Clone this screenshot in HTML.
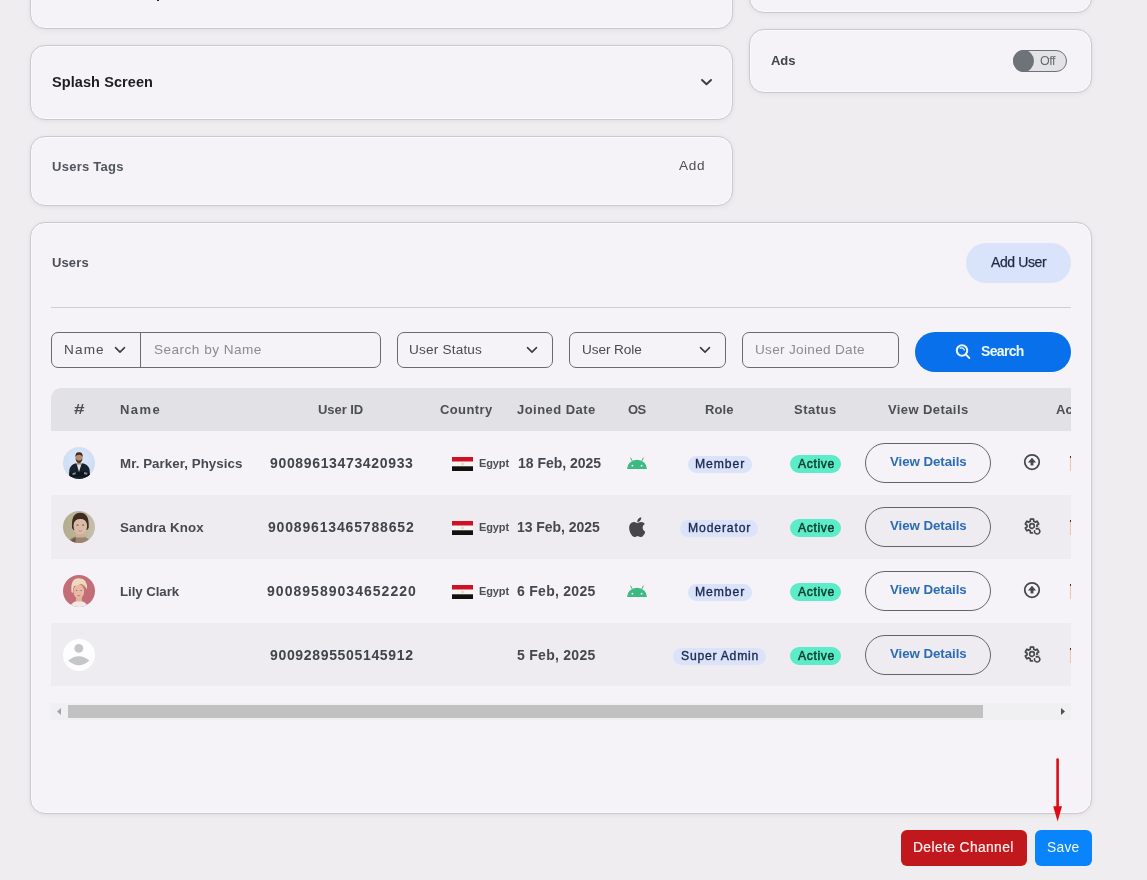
<!DOCTYPE html>
<html><head><meta charset="utf-8"><style>
html,body{margin:0;padding:0;}
body{width:1147px;height:880px;overflow:hidden;position:relative;background:#efedf0;font-family:"Liberation Sans", sans-serif;}
.card{position:absolute;box-sizing:border-box;background:#f5f3f8;border:1px solid #cbc9cf;border-radius:15px;box-shadow:0 1px 5px rgba(0,0,0,0.07), inset 0 0 0 1px rgba(255,255,255,0.5);}
.ab{position:absolute;}
.t{position:absolute;white-space:nowrap;line-height:1;font-family:"Liberation Sans", sans-serif;will-change:transform;}
</style></head><body>
<div class='card' style='left:30px;top:-60px;width:703px;height:89px'></div><div class='card' style='left:30px;top:45px;width:703px;height:75px'></div><div class='card' style='left:30px;top:136px;width:703px;height:70px'></div><div class='card' style='left:749px;top:-60px;width:343px;height:73px'></div><div class='card' style='left:749px;top:29px;width:343px;height:64px'></div><div class='card' style='left:30px;top:222px;width:1062px;height:592px'></div><div style='position:absolute;left:157.3px;top:0;width:1.8px;height:1.3px;background:#222'></div><svg class='ab' style='left:698px;top:74px' width='18' height='14' viewBox='698 74 18 14'><path d='M702 80 L706.5 84.3 L711 80' fill='none' stroke='#3a3d44' stroke-width='2' stroke-linecap='round' stroke-linejoin='round'/></svg><div class='ab' style='left:1013px;top:50px;width:54px;height:22px;box-sizing:border-box;border:1.3px solid #6e7178;border-radius:11px;background:#e3e3e7'></div><div class='ab' style='left:1013px;top:50px;width:21px;height:22px;border-radius:50%;background:#6e7279'></div><div class='ab' style='left:966px;top:243px;width:105px;height:40px;border-radius:20px;background:#d9e4fb'></div><div class='ab' style='left:51px;top:307px;width:1020px;height:1px;background:#cfced3'></div><div class='ab' style='left:51px;top:332px;width:330px;height:36px;box-sizing:border-box;border:1px solid #6a6b70;border-radius:7px;'></div><div class='ab' style='left:140px;top:332px;width:1px;height:36px;background:#6a6b70'></div><div class='ab' style='left:397px;top:332px;width:156px;height:36px;box-sizing:border-box;border:1px solid #6a6b70;border-radius:7px;'></div><div class='ab' style='left:569px;top:332px;width:157px;height:36px;box-sizing:border-box;border:1px solid #6a6b70;border-radius:7px;'></div><div class='ab' style='left:742px;top:332px;width:157px;height:36px;box-sizing:border-box;border:1px solid #6a6b70;border-radius:7px;'></div><svg class='ab' style='left:112.2px;top:344.3px' width='16' height='12' viewBox='112.2 344.3 16 12'><path d='M115.7 347.90000000000003 L120.2 352.40000000000003 L124.7 347.90000000000003' fill='none' stroke='#38393e' stroke-width='1.5' stroke-linecap='round' stroke-linejoin='round'/></svg><svg class='ab' style='left:524.3px;top:344.3px' width='16' height='12' viewBox='524.3 344.3 16 12'><path d='M527.8 347.90000000000003 L532.3 352.40000000000003 L536.8 347.90000000000003' fill='none' stroke='#38393e' stroke-width='1.5' stroke-linecap='round' stroke-linejoin='round'/></svg><svg class='ab' style='left:697px;top:344.3px' width='16' height='12' viewBox='697 344.3 16 12'><path d='M700.5 347.90000000000003 L705 352.40000000000003 L709.5 347.90000000000003' fill='none' stroke='#38393e' stroke-width='1.5' stroke-linecap='round' stroke-linejoin='round'/></svg><div class='ab' style='left:915px;top:332px;width:156px;height:40px;border-radius:20px;background:#0870ea'></div><svg class='ab' style='left:950px;top:340px' width='24' height='24' viewBox='950 340 24 24'><circle cx='962' cy='350.5' r='5.2' fill='none' stroke='#eaf8ff' stroke-width='2.1'/><path d='M966 354.6 L969.3 358' stroke='#eaf8ff' stroke-width='1.9' stroke-linecap='round'/><path d='M960.2 348.2 A3 3 0 0 1 964.3 350' fill='none' stroke='#eaf8ff' stroke-width='1.3' stroke-linecap='round'/></svg><div class='ab' style='left:51px;top:388px;width:1020px;height:43px;background:#e2e1e5;border-radius:10px 0 0 0'></div><div class='ab' style='left:51px;top:495px;width:1020px;height:64px;background:#eeecf0'></div><div class='ab' style='left:51px;top:623px;width:1020px;height:63px;background:#eeecf0'></div><div class='ab' style='left:1000px;top:395px;width:71px;height:30px;overflow:hidden'><div class='t' style='left:55.5px;top:7.6px;font-size:13px;font-weight:700;color:#4b4e55'>Actions</div></div>
<svg class='ab' style='left:63px;top:447px' width='32' height='32' viewBox='0 0 32 32'><defs><clipPath id='cm'><circle cx='16' cy='16' r='16'/></clipPath><radialGradient id='gm' cx='50%' cy='40%' r='60%'><stop offset='0' stop-color='#dce8fb'/><stop offset='1' stop-color='#cddcf3'/></radialGradient></defs><circle cx='16' cy='16' r='16' fill='url(#gm)'/><g clip-path='url(#cm)'><path d='M5.5 33 L6.5 22 Q8 17.5 13 16.3 L16 18 L19.5 16.3 Q25 17.5 26.5 22 L27.5 33 Z' fill='#17222c'/><path d='M13.6 16.8 L16 25 L18.6 16.8 L16 18.2Z' fill='#dfe3e8'/><path d='M7 26.5 Q11 23.5 16.5 25.5 Q21.5 23.5 26 26 L26 30 Q16 29 7 30Z' fill='#0f171e'/><path d='M9.5 26 L13 25.2 L12.5 27.5 L9.5 28Z' fill='#c9d0d8' opacity='.6'/><path d='M21 25 L24.5 25.8 L24 27.8 L21 27.2Z' fill='#c9d0d8' opacity='.6'/><path d='M14.5 14 L17.5 14 L17.8 17 L14.2 17Z' fill='#a87a62'/><ellipse cx='16' cy='10.6' rx='3.5' ry='4.3' fill='#b88a6e'/><path d='M12.4 10.5 Q12 5.2 16 5.3 Q20.2 5.2 19.7 10.5 Q19 7.6 16 7.7 Q13 7.6 12.4 10.5Z' fill='#3a2c24'/><path d='M12.6 11.5 Q13 15.8 16 16 Q19 15.8 19.4 11.5 Q18.5 13.5 16 13.7 Q13.5 13.5 12.6 11.5Z' fill='#4b3428'/></g></svg><svg class='ab' style='left:452px;top:457px' width='21' height='14' viewBox='0 0 21 14'><rect width='21' height='4.7' fill='#ce1126'/><rect y='4.7' width='21' height='4.6' fill='#f7f5f2'/><rect y='9.3' width='21' height='4.7' fill='#111'/><rect x='9.6' y='5.8' width='1.8' height='2.4' fill='#b8a060' opacity='.45'/></svg><svg class='ab' style='left:625px;top:455px' width='24' height='16' viewBox='625 455 24 16'><path d='M627 469 A10 9.2 0 0 1 647 469 Z' fill='#3dba84'/><path d='M630.7 458 L632.2 461' stroke='#3dba84' stroke-width='1' stroke-linecap='round'/><path d='M643.3 458 L641.8 461' stroke='#3dba84' stroke-width='1' stroke-linecap='round'/><circle cx='632.4' cy='465.7' r='0.9' fill='#e9fff4'/><circle cx='641.6' cy='465.7' r='0.9' fill='#e9fff4'/></svg><div class='ab' style='left:687.5px;top:455.5px;width:64.2px;height:17px;border-radius:9px;background:#dae3fa'></div><div class='ab' style='left:789.8px;top:455.1px;width:51px;height:17.8px;border-radius:9px;background:#5decca'></div><div class='ab' style='left:865px;top:443px;width:126px;height:40px;box-sizing:border-box;border:1px solid #626469;border-radius:20px'></div><svg class='ab' style='left:1022.45px;top:452.35px' width='20' height='20' viewBox='1022.45 452.35 20 20'><circle cx='1032.45' cy='462.35' r='7.25' fill='none' stroke='#45474c' stroke-width='1.75'/><path d='M1032.45 458.05 L1036.55 462.75 L1033.8500000000001 462.75 L1033.8500000000001 465.75 L1031.05 465.75 L1031.05 462.75 L1028.3500000000001 462.75 Z' fill='#45474c'/></svg><div class='ab' style='left:1069.5px;top:456px;width:1.5px;height:2px;background:#333'></div><div class='ab' style='left:1070px;top:458px;width:1px;height:13px;background:#f0c89a'></div><svg class='ab' style='left:63px;top:511px' width='32' height='32' viewBox='0 0 32 32'><defs><clipPath id='cw1'><circle cx='16' cy='16' r='16'/></clipPath><linearGradient id='gw1' x1='0' x2='1'><stop offset='0' stop-color='#b2ad8c'/><stop offset='1' stop-color='#c6beaa'/></linearGradient></defs><circle cx='16' cy='16' r='16' fill='url(#gw1)'/><g clip-path='url(#cw1)'><path d='M3 34 Q6 25.5 16.5 25 Q27 25.5 29 34Z' fill='#9c8470'/><path d='M6 32 Q9 27 13 26.5 L12 33Z' fill='#6e5a4c'/><path d='M13.2 21 L20.5 21 L21 26.5 L12.8 26.5Z' fill='#cfae98'/><path d='M9 17 Q8 1.5 17.3 1.8 Q26.5 1.5 25.7 17 L24 19 L10.5 19Z' fill='#3c2c24'/><ellipse cx='17.3' cy='15' rx='6.8' ry='8.6' fill='#dbbba7'/><path d='M10.4 12.5 Q10.5 4.5 17.3 4.6 Q24.2 4.5 24.2 12.5 Q22.5 7.8 17.3 8 Q12.1 7.8 10.4 12.5Z' fill='#3c2c24'/><ellipse cx='14.5' cy='14' rx='1.2' ry='0.55' fill='#5e443a'/><ellipse cx='20.1' cy='14' rx='1.2' ry='0.55' fill='#5e443a'/><path d='M15.6 19.8 Q17.3 20.6 19 19.8' stroke='#b27a70' stroke-width='0.8' fill='none'/></g></svg><svg class='ab' style='left:452px;top:521px' width='21' height='14' viewBox='0 0 21 14'><rect width='21' height='4.7' fill='#ce1126'/><rect y='4.7' width='21' height='4.6' fill='#f7f5f2'/><rect y='9.3' width='21' height='4.7' fill='#111'/><rect x='9.6' y='5.8' width='1.8' height='2.4' fill='#b8a060' opacity='.45'/></svg><svg class='ab' style='left:628.8px;top:516.5px' width='16.5' height='20.2' viewBox='0 25 384 460' preserveAspectRatio='none'><path d='M318.7 268.7c-.2-36.7 16.4-64.4 50-84.8-18.8-26.9-47.2-41.7-84.7-44.6-35.5-2.8-74.3 20.7-88.5 20.7-15 0-49.4-19.7-76.4-19.7C63.3 141.2 4 184.8 4 273.5q0 39.3 14.4 81.2c12.8 36.7 59 126.7 107.2 125.2 25.2-.6 43-17.9 75.8-17.9 31.8 0 48.3 17.9 76.4 17.9 48.6-.7 90.4-82.5 102.6-119.3-65.2-30.7-61.7-90-61.7-91.9zm-56.6-164.2c27.3-32.4 24.8-61.9 24-72.5-24.1 1.4-52 16.4-67.9 34.9-17.5 19.8-27.8 44.3-25.6 71.9 26.1 2 49.9-11.4 69.5-34.3z' fill='#46464b'/></svg><div class='ab' style='left:680.2px;top:519.5px;width:77.6px;height:17px;border-radius:9px;background:#dae3fa'></div><div class='ab' style='left:789.8px;top:519.1px;width:51px;height:17.8px;border-radius:9px;background:#5decca'></div><div class='ab' style='left:865px;top:507px;width:126px;height:40px;box-sizing:border-box;border:1px solid #626469;border-radius:20px'></div><svg class='ab' style='left:1020.4000000000001px;top:514.4px' width='24' height='24' viewBox='1020.4000000000001 514.4 24 24'><path d='M1030.61 521.73 L1030.83 519.58 L1033.97 519.58 L1034.19 521.73 L1035.55 522.51 L1037.52 521.63 L1039.09 524.35 L1037.34 525.62 L1037.34 527.18 L1039.09 528.45 L1037.52 531.17 L1035.55 530.29 L1034.19 531.07 L1033.97 533.22 L1030.83 533.22 L1030.61 531.07 L1029.25 530.29 L1027.28 531.17 L1025.71 528.45 L1027.46 527.18 L1027.46 525.62 L1025.71 524.35 L1027.28 521.63 L1029.25 522.51 Z' fill='none' stroke='#45474c' stroke-width='1.7' stroke-linejoin='round'/><circle cx='1032.4' cy='526.4' r='2.35' fill='none' stroke='#45474c' stroke-width='1.6'/><circle cx='1037.5' cy='531.6999999999999' r='4.4' fill='#eeecf0'/><path d='M1037.2 528.9999999999999 A2.7 2.7 0 1 1 1034.9 531.0999999999999' fill='none' stroke='#45474c' stroke-width='1.6' stroke-linecap='round'/><path d='M1035.9 527.8 L1038.1 529.0999999999999 L1036.2 530.4999999999999Z' fill='#45474c'/></svg><div class='ab' style='left:1069.5px;top:520px;width:1.5px;height:2px;background:#333'></div><div class='ab' style='left:1070px;top:522px;width:1px;height:13px;background:#f0c89a'></div><svg class='ab' style='left:63px;top:575px' width='32' height='32' viewBox='0 0 32 32'><defs><clipPath id='cw2'><circle cx='16' cy='16' r='16'/></clipPath></defs><circle cx='16' cy='16' r='16' fill='#c36d79'/><g clip-path='url(#cw2)'><path d='M6 34 Q8 26.5 16 25.5 Q24 26.5 26 34Z' fill='#f0e8e4'/><path d='M13.2 21 L18.8 21 L19 26.5 L13 26.5Z' fill='#e2b4a2'/><ellipse cx='15.8' cy='16.5' rx='5.4' ry='7.2' fill='#e9b9a6'/><path d='M8.5 17 Q7 3 16 3.2 Q25 3.5 24 14.5 Q22 9.5 17.5 9 Q14 11 11 11 Q10 13.5 9.8 18Z' fill='#efd9bd'/><path d='M20 8.5 Q23.5 10 23.5 15 Q22.6 11 19.5 10Z' fill='#e6c8a8'/><ellipse cx='13.6' cy='15.5' rx='1' ry='0.45' fill='#8a5a50'/><ellipse cx='18.2' cy='15.5' rx='1' ry='0.45' fill='#8a5a50'/><path d='M14.3 20.5 Q15.8 21.2 17.3 20.5' stroke='#c0686a' stroke-width='0.8' fill='none'/></g></svg><svg class='ab' style='left:452px;top:585px' width='21' height='14' viewBox='0 0 21 14'><rect width='21' height='4.7' fill='#ce1126'/><rect y='4.7' width='21' height='4.6' fill='#f7f5f2'/><rect y='9.3' width='21' height='4.7' fill='#111'/><rect x='9.6' y='5.8' width='1.8' height='2.4' fill='#b8a060' opacity='.45'/></svg><svg class='ab' style='left:625px;top:583px' width='24' height='16' viewBox='625 583 24 16'><path d='M627 597 A10 9.2 0 0 1 647 597 Z' fill='#3dba84'/><path d='M630.7 586 L632.2 589' stroke='#3dba84' stroke-width='1' stroke-linecap='round'/><path d='M643.3 586 L641.8 589' stroke='#3dba84' stroke-width='1' stroke-linecap='round'/><circle cx='632.4' cy='593.7' r='0.9' fill='#e9fff4'/><circle cx='641.6' cy='593.7' r='0.9' fill='#e9fff4'/></svg><div class='ab' style='left:687.5px;top:583.5px;width:64.2px;height:17px;border-radius:9px;background:#dae3fa'></div><div class='ab' style='left:789.8px;top:583.1px;width:51px;height:17.8px;border-radius:9px;background:#5decca'></div><div class='ab' style='left:865px;top:571px;width:126px;height:40px;box-sizing:border-box;border:1px solid #626469;border-radius:20px'></div><svg class='ab' style='left:1022.45px;top:580.35px' width='20' height='20' viewBox='1022.45 580.35 20 20'><circle cx='1032.45' cy='590.35' r='7.25' fill='none' stroke='#45474c' stroke-width='1.75'/><path d='M1032.45 586.0500000000001 L1036.55 590.75 L1033.8500000000001 590.75 L1033.8500000000001 593.75 L1031.05 593.75 L1031.05 590.75 L1028.3500000000001 590.75 Z' fill='#45474c'/></svg><div class='ab' style='left:1069.5px;top:584px;width:1.5px;height:2px;background:#333'></div><div class='ab' style='left:1070px;top:586px;width:1px;height:13px;background:#f0c89a'></div><svg class='ab' style='left:63.400000000000006px;top:639.2px' width='32' height='32' viewBox='0 0 32 32'><circle cx='16' cy='16' r='16' fill='#fdfdfd'/><circle cx='15.8' cy='9.4' r='4.4' fill='#c4c6c8'/><path d='M5.2 21.5 Q15.8 13 26.4 21.5 Q15.8 31 5.2 21.5 Z' fill='#c4c6c8'/></svg><div class='ab' style='left:673.4px;top:647.5px;width:92.8px;height:17px;border-radius:9px;background:#dae3fa'></div><div class='ab' style='left:789.8px;top:647.1px;width:51px;height:17.8px;border-radius:9px;background:#5decca'></div><div class='ab' style='left:865px;top:635px;width:126px;height:40px;box-sizing:border-box;border:1px solid #626469;border-radius:20px'></div><svg class='ab' style='left:1020.4000000000001px;top:642.4px' width='24' height='24' viewBox='1020.4000000000001 642.4 24 24'><path d='M1030.61 649.73 L1030.83 647.58 L1033.97 647.58 L1034.19 649.73 L1035.55 650.51 L1037.52 649.63 L1039.09 652.35 L1037.34 653.62 L1037.34 655.18 L1039.09 656.45 L1037.52 659.17 L1035.55 658.29 L1034.19 659.07 L1033.97 661.22 L1030.83 661.22 L1030.61 659.07 L1029.25 658.29 L1027.28 659.17 L1025.71 656.45 L1027.46 655.18 L1027.46 653.62 L1025.71 652.35 L1027.28 649.63 L1029.25 650.51 Z' fill='none' stroke='#45474c' stroke-width='1.7' stroke-linejoin='round'/><circle cx='1032.4' cy='654.4' r='2.35' fill='none' stroke='#45474c' stroke-width='1.6'/><circle cx='1037.5' cy='659.6999999999999' r='4.4' fill='#eeecf0'/><path d='M1037.2 656.9999999999999 A2.7 2.7 0 1 1 1034.9 659.0999999999999' fill='none' stroke='#45474c' stroke-width='1.6' stroke-linecap='round'/><path d='M1035.9 655.8 L1038.1 657.0999999999999 L1036.2 658.4999999999999Z' fill='#45474c'/></svg><div class='ab' style='left:1069.5px;top:648px;width:1.5px;height:2px;background:#333'></div><div class='ab' style='left:1070px;top:650px;width:1px;height:13px;background:#f0c89a'></div><div class='ab' style='left:51px;top:703px;width:1020px;height:17px;background:#f0eff2'></div><div class='ab' style='left:68px;top:705px;width:915px;height:13px;background:#c1c1c1'></div><svg class='ab' style='left:55px;top:706px' width='8' height='11' viewBox='0 0 8 11'><path d='M6 2 L2 5.5 L6 9Z' fill='#a3a3a3'/></svg><svg class='ab' style='left:1059px;top:706px' width='8' height='11' viewBox='0 0 8 11'><path d='M2 2 L6 5.5 L2 9Z' fill='#505050'/></svg><div class='ab' style='left:901px;top:830px;width:126px;height:36px;border-radius:6px;background:#c1181d'></div><div class='ab' style='left:1035px;top:830px;width:57px;height:36px;border-radius:6px;background:#0a84fb'></div><svg class='ab' style='left:1045px;top:750px' width='24' height='80' viewBox='1045 750 24 80'><path d='M1057.6 759.5 L1057.6 808' stroke='#de0b16' stroke-width='2.6' stroke-linecap='round'/><path d='M1053.2 806.3 L1062 806.3 L1057.6 821.5Z' fill='#de0b16'/></svg>
<div class='t' style='left:51.80px;top:74.97px;font-size:14.5px;font-weight:700;color:#1d1d21;letter-spacing:0.083px;'>Splash Screen</div><div class='t' style='left:51.80px;top:159.95px;font-size:13px;font-weight:700;color:#50555d;letter-spacing:0.267px;'>Users Tags</div><div class='t' style='left:678.50px;top:159.34px;font-size:13.6px;font-weight:400;color:#4d4d52;letter-spacing:0.700px;'>Add</div><div class='t' style='left:771.20px;top:53.75px;font-size:13px;font-weight:700;color:#40444b;letter-spacing:-0.100px;'>Ads</div><div class='t' style='left:1039.70px;top:54.67px;font-size:12.5px;font-weight:400;color:#666a70;letter-spacing:-0.450px;'>Off</div><div class='t' style='left:51.50px;top:255.75px;font-size:13px;font-weight:700;color:#4a4e56;letter-spacing:0.125px;'>Users</div><div class='t' style='left:990.50px;top:255.00px;font-size:14px;font-weight:400;color:#1f2b45;letter-spacing:-0.400px;-webkit-text-stroke:0.25px #1f2b45;'>Add User</div><div class='t' style='left:64.00px;top:342.74px;font-size:13.6px;font-weight:400;color:#4a4a4f;letter-spacing:1.133px;'>Name</div><div class='t' style='left:154.00px;top:342.74px;font-size:13.6px;font-weight:400;color:#8b8b91;letter-spacing:0.469px;'>Search by Name</div><div class='t' style='left:409.40px;top:342.74px;font-size:13.6px;font-weight:400;color:#4a4a4f;letter-spacing:0.190px;'>User Status</div><div class='t' style='left:582.20px;top:342.74px;font-size:13.6px;font-weight:400;color:#4a4a4f;letter-spacing:-0.075px;'>User Role</div><div class='t' style='left:754.60px;top:342.74px;font-size:13.6px;font-weight:400;color:#8b8b91;letter-spacing:0.307px;'>User Joined Date</div><div class='t' style='left:980.80px;top:343.90px;font-size:14px;font-weight:700;color:#eef8ff;letter-spacing:-0.660px;'>Search</div><div class='t' style='left:74.30px;top:401.80px;font-size:14px;font-weight:700;color:#4b4e55;letter-spacing:0.000px;display:inline-block;transform:scaleX(1.35);transform-origin:0 0;'>#</div><div class='t' style='left:119.80px;top:402.65px;font-size:13px;font-weight:700;color:#4b4e55;letter-spacing:1.400px;'>Name</div><div class='t' style='left:318.20px;top:402.65px;font-size:13px;font-weight:700;color:#4b4e55;letter-spacing:-0.067px;'>User ID</div><div class='t' style='left:439.70px;top:402.65px;font-size:13px;font-weight:700;color:#4b4e55;letter-spacing:0.383px;'>Country</div><div class='t' style='left:517.20px;top:402.65px;font-size:13px;font-weight:700;color:#4b4e55;letter-spacing:0.450px;'>Joined Date</div><div class='t' style='left:628.00px;top:402.65px;font-size:13px;font-weight:700;color:#4b4e55;letter-spacing:-0.700px;'>OS</div><div class='t' style='left:705.00px;top:402.65px;font-size:13px;font-weight:700;color:#4b4e55;letter-spacing:0.067px;'>Role</div><div class='t' style='left:794.40px;top:402.65px;font-size:13px;font-weight:700;color:#4b4e55;letter-spacing:0.500px;'>Status</div><div class='t' style='left:887.80px;top:402.65px;font-size:13px;font-weight:700;color:#4b4e55;letter-spacing:0.409px;'>View Details</div><div class='t' style='left:119.60px;top:456.69px;font-size:13.3px;font-weight:700;color:#464951;letter-spacing:0.061px;'>Mr. Parker, Physics</div><div class='t' style='left:269.50px;top:455.80px;font-size:14px;font-weight:700;color:#40444b;letter-spacing:0.656px;'>90089613473420933</div><div class='t' style='left:478.90px;top:457.65px;font-size:11px;font-weight:700;color:#4b4f56;letter-spacing:-0.125px;'>Egypt</div><div class='t' style='left:517.70px;top:455.90px;font-size:14px;font-weight:700;color:#45484f;letter-spacing:-0.027px;'>18 Feb, 2025</div><div class='t' style='left:694.50px;top:457.93px;font-size:12.2px;font-weight:400;color:#1b294c;letter-spacing:0.900px;-webkit-text-stroke:0.35px #1b294c;'>Member</div><div class='t' style='left:797.60px;top:457.93px;font-size:12.2px;font-weight:400;color:#0d382b;letter-spacing:0.620px;-webkit-text-stroke:0.45px #0d382b;'>Active</div><div class='t' style='left:889.90px;top:455.09px;font-size:13.3px;font-weight:700;color:#2b6cb6;letter-spacing:-0.064px;'>View Details</div><div class='t' style='left:119.50px;top:520.70px;font-size:13.3px;font-weight:700;color:#464951;letter-spacing:0.170px;'>Sandra Knox</div><div class='t' style='left:268.40px;top:519.80px;font-size:14px;font-weight:700;color:#40444b;letter-spacing:0.838px;'>90089613465788652</div><div class='t' style='left:478.90px;top:521.65px;font-size:11px;font-weight:700;color:#4b4f56;letter-spacing:-0.125px;'>Egypt</div><div class='t' style='left:517.30px;top:519.90px;font-size:14px;font-weight:700;color:#45484f;letter-spacing:-0.045px;'>13 Feb, 2025</div><div class='t' style='left:688.00px;top:521.93px;font-size:12.2px;font-weight:400;color:#1b294c;letter-spacing:0.850px;-webkit-text-stroke:0.35px #1b294c;'>Moderator</div><div class='t' style='left:797.60px;top:521.93px;font-size:12.2px;font-weight:400;color:#0d382b;letter-spacing:0.620px;-webkit-text-stroke:0.45px #0d382b;'>Active</div><div class='t' style='left:889.90px;top:519.10px;font-size:13.3px;font-weight:700;color:#2b6cb6;letter-spacing:-0.064px;'>View Details</div><div class='t' style='left:119.50px;top:584.70px;font-size:13.3px;font-weight:700;color:#464951;letter-spacing:-0.078px;'>Lily Clark</div><div class='t' style='left:266.70px;top:583.80px;font-size:14px;font-weight:700;color:#40444b;letter-spacing:1.031px;'>90089589034652220</div><div class='t' style='left:478.90px;top:585.65px;font-size:11px;font-weight:700;color:#4b4f56;letter-spacing:-0.125px;'>Egypt</div><div class='t' style='left:517.30px;top:583.90px;font-size:14px;font-weight:700;color:#45484f;letter-spacing:0.280px;'>6 Feb, 2025</div><div class='t' style='left:694.50px;top:585.93px;font-size:12.2px;font-weight:400;color:#1b294c;letter-spacing:0.900px;-webkit-text-stroke:0.35px #1b294c;'>Member</div><div class='t' style='left:797.60px;top:585.93px;font-size:12.2px;font-weight:400;color:#0d382b;letter-spacing:0.620px;-webkit-text-stroke:0.45px #0d382b;'>Active</div><div class='t' style='left:889.90px;top:583.10px;font-size:13.3px;font-weight:700;color:#2b6cb6;letter-spacing:-0.064px;'>View Details</div><div class='t' style='left:269.50px;top:647.80px;font-size:14px;font-weight:700;color:#40444b;letter-spacing:0.663px;'>90092895505145912</div><div class='t' style='left:517.30px;top:647.90px;font-size:14px;font-weight:700;color:#45484f;letter-spacing:0.280px;'>5 Feb, 2025</div><div class='t' style='left:680.80px;top:649.93px;font-size:12.2px;font-weight:400;color:#1b294c;letter-spacing:0.750px;-webkit-text-stroke:0.35px #1b294c;'>Super Admin</div><div class='t' style='left:797.60px;top:649.93px;font-size:12.2px;font-weight:400;color:#0d382b;letter-spacing:0.620px;-webkit-text-stroke:0.45px #0d382b;'>Active</div><div class='t' style='left:889.90px;top:647.10px;font-size:13.3px;font-weight:700;color:#2b6cb6;letter-spacing:-0.064px;'>View Details</div><div class='t' style='left:912.80px;top:840.57px;font-size:13.8px;font-weight:400;color:#fff0f0;letter-spacing:0.400px;-webkit-text-stroke:0.2px #fff0f0;'>Delete Channel</div><div class='t' style='left:1047.40px;top:840.57px;font-size:13.8px;font-weight:400;color:#eef8ff;letter-spacing:0.267px;'>Save</div>
</body></html>
